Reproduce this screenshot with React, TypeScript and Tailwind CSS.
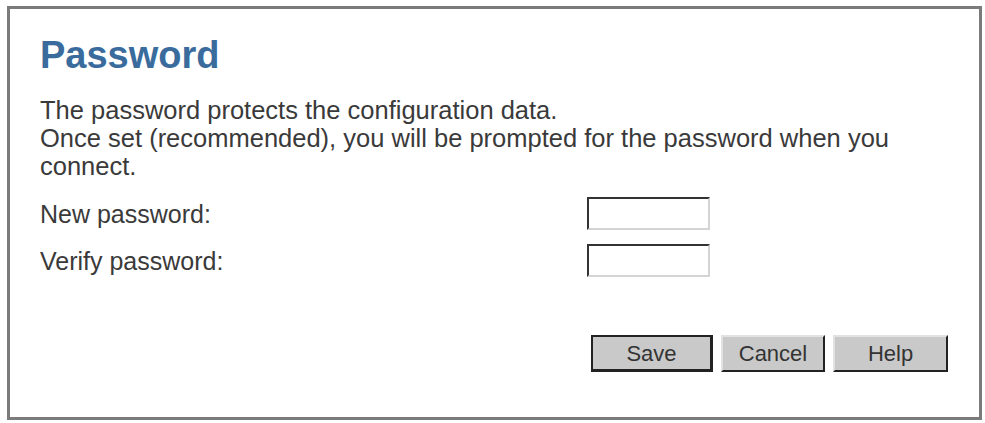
import React from 'react';

const font = { fontFamily: '"Liberation Sans", Arial, sans-serif' };

function Field({ label }: { label: string }) {
  return (
    <>
      <span className="self-center">{label}</span>
      <input
        type="password"
        className="h-[33px] w-[123px] border-2 border-t-[#333] border-l-[#333] border-b-[#d4d4d4] border-r-[#d4d4d4] bg-white outline-none"
      />
    </>
  );
}

export default function App() {
  return (
    <div className="w-[985px] h-[423px] bg-white pt-[6px] pl-[7px]" style={font}>
      <div className="w-[975px] h-[414px] border-[3px] border-[#7b7b7b] pl-[30px] pr-[31px] flex flex-col text-[#3a3a3a]">
        <h1 className="mt-[22px] text-[38px] leading-[48px] font-bold text-[#3a6b9d]">Password</h1>
        <p className="mt-[17px] text-[25.5px] leading-[28px]">
          The password protects the configuration data.
          <br />
          Once set (recommended), you will be prompted for the password when you connect.
        </p>
        <div className="mt-[17px] grid grid-cols-[547px_123px] grid-rows-[33px_33px] gap-y-[14px] text-[25px] leading-[28px]">
          <Field label="New password:" />
          <Field label="Verify password:" />
        </div>
        <div className="mt-auto mb-[45px] flex justify-end gap-[8px] text-[22px]">
          <button className="w-[122px] h-[37px] bg-[#c9c9c9] border-2 border-[#222] border-b-[3px] border-r-[3px] text-[#333]">
            Save
          </button>
          <button className="w-[104px] h-[37px] bg-[#c9c9c9] border-2 border-t-[#e2e2e2] border-l-[#e2e2e2] border-b-[#222] border-r-[#222] text-[#333]">
            Cancel
          </button>
          <button className="w-[115px] h-[37px] bg-[#c9c9c9] border-2 border-t-[#e2e2e2] border-l-[#e2e2e2] border-b-[#222] border-r-[#222] text-[#333]">
            Help
          </button>
        </div>
      </div>
    </div>
  );
}
